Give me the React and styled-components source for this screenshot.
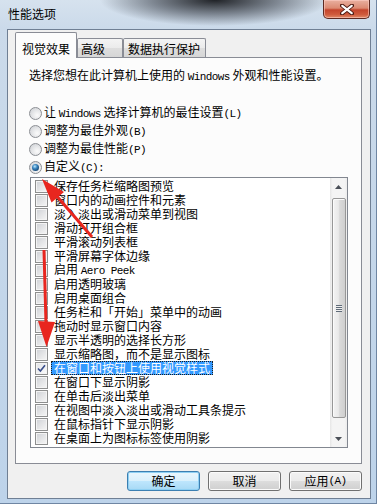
import React from "react";
import styled, { createGlobalStyle, css } from "styled-components";

const CJK = `"Noto Sans CJK SC", "Noto Sans", sans-serif`;
const MONO = `"Liberation Mono", "DejaVu Sans Mono", monospace`;

const GlobalStyle = createGlobalStyle`
  html, body { margin: 0; padding: 0; background: #c6d8ec; }
  body { font-family: ${CJK}; font-size: 12px; color: #000; }
  * { box-sizing: border-box; }
`;

const Window = styled.div`
  position: relative;
  width: 377px;
  height: 504px;
  display: flex;
  flex-direction: column;
  padding: 0 6px 5px 7px;
  overflow: hidden;
  background:
    radial-gradient(ellipse 115px 26px at 215px 0px, rgba(22, 24, 28, 0.95), rgba(70, 76, 86, 0.6) 55%, rgba(120, 130, 145, 0) 100%),
    linear-gradient(180deg, #d6e2ee 0px, #cbdaea 28px, #bdd3ea 100%);
  box-shadow: inset -1px 0 0 #6f86a3, inset 0 -1px 0 #6f86a3;
`;

const TitleBar = styled.div`
  height: 29px;
  flex: none;
  display: flex;
  align-items: flex-start;
  justify-content: space-between;
`;

const Title = styled.div`
  padding: 7px 0 0 1px;
  line-height: 14px;
  font-size: 12px;
  color: #000;
`;

const CloseButton = styled.div`
  width: 47px;
  height: 19px;
  margin-right: 1px;
  border: 1px solid #5d2a22;
  border-top: none;
  border-radius: 0 0 5px 5px;
  display: flex;
  align-items: center;
  justify-content: center;
  background: linear-gradient(180deg, #e9b0a0 0%, #dc8a72 45%, #c4452c 55%, #cf5a3c 80%, #e08a68 100%);
  box-shadow: inset 0 0 0 1px rgba(255, 210, 200, 0.55);
`;

const Client = styled.div`
  flex: 1;
  display: flex;
  flex-direction: column;
  background: #f0f0f0;
  border: 1px solid #6f7f94;
  padding: 2px 8px 0 7px;
`;

const TabStrip = styled.div`
  height: 25px;
  flex: none;
  display: flex;
  align-items: flex-end;
  position: relative;
  z-index: 1;
`;

const Tab = styled.div`
  width: ${(p) => p.$w}px;
  border: 1px solid #898c95;
  border-bottom: none;
  border-radius: 2px 2px 0 0;
  line-height: 14px;
  display: flex;
  align-items: flex-end;
  ${(p) =>
    p.$active
      ? css`
          height: 26px;
          margin-bottom: -1px;
          background: #fcfcfc;
          padding: 0 0 2px 6px;
        `
      : css`
          height: 19px;
          background: linear-gradient(180deg, #f4f4f4 0%, #ebebeb 50%, #dedede 51%, #d6d6d6 100%);
          padding: 0 0 1px ${p.$pl}px;
        `}
`;

const Panel = styled.div`
  width: 347px;
  height: 407px;
  flex: none;
  border: 1px solid #898c95;
  background: #fcfcfc;
  padding: 10px 0 0 13px;
  display: flex;
  flex-direction: column;
`;

const Latin = styled.span`
  font-family: ${MONO};
  font-size: 11px;
  letter-spacing: -0.6px;
`;

const Intro = styled.div`
  line-height: 14px;
  height: 14px;
  white-space: nowrap;
`;

const RadioGroup = styled.div`
  margin-top: 22px;
  display: flex;
  flex-direction: column;
`;

const RadioRow = styled.div`
  height: 18px;
  display: flex;
  align-items: center;
  white-space: nowrap;
`;

const RadioLabel = styled.span`
  line-height: 14px;
  white-space: pre;
`;

const RadioDot = styled.span`
  width: 13px;
  height: 13px;
  flex: none;
  margin-right: 2px;
  border-radius: 50%;
  border: 1px solid #8c8f94;
  display: flex;
  align-items: center;
  justify-content: center;
  background: radial-gradient(circle at 65% 65%, #fbfbfb 0%, #e6e7e9 45%, #c9ccd1 100%);
  &::after {
    content: "";
    display: ${(p) => (p.$on ? "block" : "none")};
    width: 7px;
    height: 7px;
    border-radius: 50%;
    background: radial-gradient(circle at 40% 35%, #bfe8fb 0%, #3d89c3 35%, #1a4f7e 70%, #0e3357 100%);
  }
`;

const ListBox = styled.div`
  margin: 1px 0 0 1px;
  width: 318px;
  height: 271px;
  border: 1px solid #828790;
  background: #fff;
  display: flex;
`;

const Items = styled.div`
  flex: 1;
  padding-top: 1px;
`;

const ItemRow = styled.div`
  height: 14px;
  display: flex;
  align-items: center;
  padding-left: 4px;
  white-space: nowrap;
`;

const CheckBox = styled.span`
  width: 13px;
  height: 13px;
  flex: none;
  margin-right: 3px;
  border: 1px solid #8e8f8f;
  display: flex;
  align-items: center;
  justify-content: center;
  background: ${(p) =>
    p.$on
      ? "linear-gradient(135deg, #e2e4e8 0%, #fbfbfb 100%)"
      : "linear-gradient(135deg, #cdd0d5 0%, #e3e4e6 50%, #f6f6f6 100%)"};
  box-shadow: inset 0 0 0 1px #f4f4f4;
`;

const ItemLabel = styled.span`
  display: inline-block;
  line-height: 12px;
  padding: 0 2px;
  border: 1px solid transparent;
  white-space: pre;
  ${(p) =>
    p.$selected &&
    css`
      background: #3399ff;
      color: #fff;
      border: 1px dotted #1d1d1d;
    `}
`;

const ScrollBar = styled.div`
  width: 17px;
  flex: none;
  display: flex;
  flex-direction: column;
  background: linear-gradient(90deg, #e6e6e6 0%, #f4f4f4 15%, #f4f4f4 85%, #ececec 100%);
`;

const ScrollArrow = styled.div`
  height: 17px;
  flex: none;
  display: flex;
  align-items: center;
  justify-content: center;
  margin-top: ${(p) => (p.$down ? "auto" : "0")};
`;

const Thumb = styled.div`
  margin: 3px 1px 0 2px;
  height: 220px;
  border: 1px solid #979797;
  border-radius: 2px;
  background: linear-gradient(90deg, #f3f3f3 0%, #e9e9e9 45%, #dadada 55%, #cfcfcf 100%);
  box-shadow: inset 1px 1px 0 #fbfbfb;
  display: flex;
  align-items: center;
  justify-content: center;
`;

const Grip = styled.div`
  width: 6px;
  height: 7px;
  background: repeating-linear-gradient(180deg, #5f6b78 0px, #5f6b78 1px, #eeeeee 1px, #eeeeee 2px);
`;

const ButtonRow = styled.div`
  margin-top: 7px;
  display: flex;
  justify-content: flex-end;
  gap: 8px;
`;

const Button = styled.div`
  width: 73px;
  height: 20px;
  border-radius: 3px;
  display: flex;
  align-items: center;
  justify-content: center;
  line-height: 14px;
  white-space: pre;
  ${(p) =>
    p.$default
      ? css`
          border: 1px solid #3c7fb1;
          background: linear-gradient(180deg, #eaf6fd 0%, #d9f0fc 50%, #bee6fd 51%, #a7d9f5 100%);
          box-shadow: inset 0 0 0 1px #8fd0f3;
        `
      : css`
          border: 1px solid #707070;
          background: linear-gradient(180deg, #f2f2f2 0%, #ebebeb 50%, #dddddd 51%, #cfcfcf 100%);
          box-shadow: inset 0 0 0 1px #fbfbfb;
        `}
`;

const Annotations = styled.svg`
  position: absolute;
  left: 0;
  top: 0;
  pointer-events: none;
`;

const items = [
  { t: "保存任务栏缩略图预览" },
  { t: "窗口内的动画控件和元素" },
  { t: "淡入淡出或滑动菜单到视图" },
  { t: "滑动打开组合框" },
  { t: "平滑滚动列表框" },
  { t: "平滑屏幕字体边缘" },
  { t: "启用 ", latin: "Aero Peek" },
  { t: "启用透明玻璃" },
  { t: "启用桌面组合" },
  { t: "任务栏和「开始」菜单中的动画" },
  { t: "拖动时显示窗口内容" },
  { t: "显示半透明的选择长方形" },
  { t: "显示缩略图，而不是显示图标" },
  { t: "在窗口和按钮上使用视觉样式", on: true, selected: true },
  { t: "在窗口下显示阴影" },
  { t: "在单击后淡出菜单" },
  { t: "在视图中淡入淡出或滑动工具条提示" },
  { t: "在鼠标指针下显示阴影" },
  { t: "在桌面上为图标标签使用阴影" },
];

const CheckMark = () => (
  <svg width="9" height="9" viewBox="0 0 9 9">
    <path d="M1 4.5 L3.4 7 L8 1.2" fill="none" stroke="#3b4f8a" strokeWidth="1.6" />
  </svg>
);

const ArrowUp = () => (
  <svg width="7" height="4" viewBox="0 0 7 4">
    <path d="M0 4 L3.5 0 L7 4 Z" fill="#4a4f57" />
  </svg>
);

const ArrowDown = () => (
  <svg width="7" height="4" viewBox="0 0 7 4">
    <path d="M0 0 L3.5 4 L7 0 Z" fill="#4a4f57" />
  </svg>
);

const CloseX = () => (
  <svg width="14" height="11" viewBox="0 0 14 11">
    <path d="M2 1.5 L12 9.5 M12 1.5 L2 9.5" stroke="#4a1810" strokeWidth="4" strokeLinecap="round" />
    <path d="M2.3 1.8 L11.7 9.2 M11.7 1.8 L2.3 9.2" stroke="#ffffff" strokeWidth="2.2" strokeLinecap="round" />
  </svg>
);

export default function App() {
  return (
    <>
      <GlobalStyle />
      <Window>
        <TitleBar>
          <Title>性能选项</Title>
          <CloseButton>
            <CloseX />
          </CloseButton>
        </TitleBar>
        <Client>
          <TabStrip>
            <Tab $active $w={62}>视觉效果</Tab>
            <Tab $w={46} $pl={3}>高级</Tab>
            <Tab $w={83} $pl={4}>数据执行保护</Tab>
          </TabStrip>
          <Panel>
            <Intro>
              选择您想在此计算机上使用的 <Latin>Windows</Latin> 外观和性能设置。
            </Intro>
            <RadioGroup>
              <RadioRow>
                <RadioDot />
                <RadioLabel>
                  {"让 "}<Latin>Windows</Latin>{" 选择计算机的最佳设置"}<Latin>(L)</Latin>
                </RadioLabel>
              </RadioRow>
              <RadioRow>
                <RadioDot />
                <RadioLabel>
                  调整为最佳外观<Latin>(B)</Latin>
                </RadioLabel>
              </RadioRow>
              <RadioRow>
                <RadioDot />
                <RadioLabel>
                  调整为最佳性能<Latin>(P)</Latin>
                </RadioLabel>
              </RadioRow>
              <RadioRow>
                <RadioDot $on />
                <RadioLabel>
                  自定义<Latin>(C):</Latin>
                </RadioLabel>
              </RadioRow>
            </RadioGroup>
            <ListBox>
              <Items>
                {items.map((it, i) => (
                  <ItemRow key={i}>
                    <CheckBox $on={it.on}>{it.on && <CheckMark />}</CheckBox>
                    <ItemLabel $selected={it.selected}>
                      {it.t}
                      {it.latin && <Latin>{it.latin}</Latin>}
                    </ItemLabel>
                  </ItemRow>
                ))}
              </Items>
              <ScrollBar>
                <ScrollArrow>
                  <ArrowUp />
                </ScrollArrow>
                <Thumb>
                  <Grip />
                </Thumb>
                <ScrollArrow $down>
                  <ArrowDown />
                </ScrollArrow>
              </ScrollBar>
            </ListBox>
          </Panel>
          <ButtonRow>
            <Button $default>确定</Button>
            <Button>取消</Button>
            <Button>
              应用<Latin>(A)</Latin>
            </Button>
          </ButtonRow>
        </Client>
        <Annotations width="377" height="504" viewBox="0 0 377 504">
          <line x1="92" y1="237" x2="55" y2="194" stroke="#e8261f" strokeWidth="3" />
          <polygon points="42,179 64,192 51.5,202.5" fill="#e8261f" />
          <line x1="44" y1="250" x2="46" y2="324" stroke="#e8261f" strokeWidth="3" />
          <polygon points="46.5,347 38,321 55,322" fill="#e8261f" />
        </Annotations>
      </Window>
    </>
  );
}
